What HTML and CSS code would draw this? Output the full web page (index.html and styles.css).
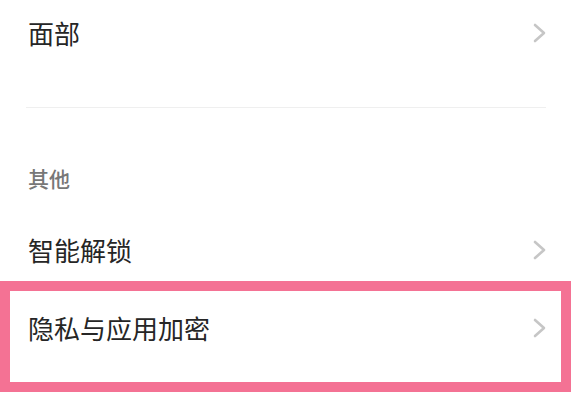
FILE: index.html
```html
<!DOCTYPE html>
<html lang="zh-CN">
<head>
  <meta charset="UTF-8">
  <title>安全设置</title>
  <meta name="viewport" content="width=device-width, initial-scale=1.0">
  <link rel="stylesheet" href="styles.css">
</head>
<body>
  <div class="list">
    <div class="item first">
      <span class="label">面部</span>
      <svg class="chev" width="14" height="20" viewBox="0 0 14 20"><polyline points="2,2 11,10 2,18" /></svg>
    </div>

    <div class="divider"></div>

    <div class="section-title">其他</div>

    <div class="item">
      <span class="label">智能解锁</span>
      <svg class="chev" width="14" height="20" viewBox="0 0 14 20"><polyline points="2,2 11,10 2,18" /></svg>
    </div>
    <div class="item marked">
      <span class="label">隐私与应用加密</span>
      <svg class="chev" width="14" height="20" viewBox="0 0 14 20"><polyline points="2,2 11,10 2,18" /></svg>
    </div>
  </div>
</body>
</html>
```

FILE: styles.css
```css
html, body { height:100%; }
body { margin:0; background:#fff; font-family:"Noto Sans CJK SC", "Noto Sans", sans-serif; color:#262626; }
.list { display:flex; flex-direction:column; padding-bottom:37px; }

/* Rows */
.item { height:78px; display:flex; align-items:center; justify-content:space-between; padding:0 25px 0 28px; }
.item.first { height:66px; }
.label { font-size:26px; line-height:30px; }
.chev { fill:none; stroke:#c6c6c6; stroke-width:2.6; stroke-linecap:round; stroke-linejoin:round; }

.divider { height:1px; background:#efefef; margin:41px 26px 0 26px; }

.section-title { margin-top:56px; height:28px; line-height:28px; padding-left:28px; font-size:21px; color:#777; font-weight:500; }
.section-title + .item { margin-top:19px; }

/* Pink highlight frame over the last row */
.item.marked { position:relative; }
.item.marked::after { content:""; position:absolute; left:0; right:1px; top:-8px; bottom:-25px; border:10px solid #f47294; }
```
